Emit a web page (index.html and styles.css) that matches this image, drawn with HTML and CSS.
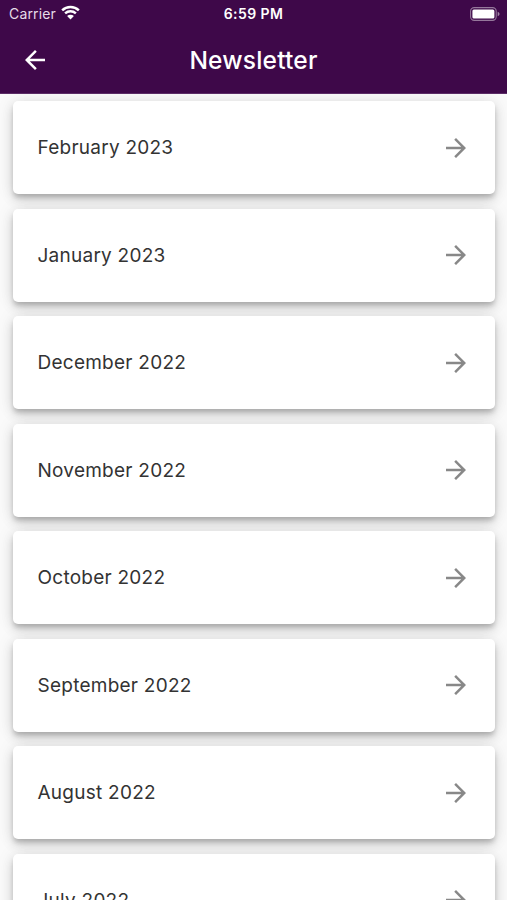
FILE: index.html
```html
<!DOCTYPE html>
<html lang="en">
<head>
<meta charset="utf-8">
<title>Newsletter</title>
<link rel="stylesheet" href="styles.css">
</head>
<body>
<svg width="0" height="0" class="defs">
  <symbol id="forward" viewBox="0 0 24 24"><path d="M12 4l-1.41 1.41L16.17 11H4v2h12.17l-5.58 5.59L12 20l8-8z"/></symbol>
</svg>
<header class="header">
  <div class="status">
    <div class="carrier"><span>Carrier</span>
      <svg class="wifi" viewBox="0 0 18 14"><path d="M1.1 4.9a11.4 11.4 0 0 1 15.8 0M3.9 7.9a7.4 7.4 0 0 1 10.2 0" fill="none" stroke="#fff" stroke-width="2.3"/><path d="M9 13.6L5.8 10.4a4.6 4.6 0 0 1 6.4 0z" fill="#fff"/></svg>
    </div>
    <div class="time">6:59 PM</div>
    <svg class="battery" viewBox="0 0 30 14"><rect x=".6" y=".6" width="25.6" height="12.8" rx="3.6" fill="none" stroke="#fff" stroke-opacity=".45" stroke-width="1.1"/><rect x="2.4" y="2.4" width="22" height="9.2" rx="1.5" fill="#fff"/><path d="M27.7 4.8c2.4 1 2.4 3.4 0 4.4z" fill="#fff" fill-opacity=".5"/></svg>
  </div>
  <div class="appbar">
    <svg class="icon back" viewBox="0 0 24 24"><path d="M20 11H7.83l5.59-5.59L12 4l-8 8 8 8 1.41-1.41L7.83 13H20v-2z"/></svg>
    <h1 class="title">Newsletter</h1>
  </div>
</header>
<main class="list">
  <div class="card"><span>February 2023</span><svg class="icon"><use href="#forward"/></svg></div>
  <div class="card"><span>January 2023</span><svg class="icon"><use href="#forward"/></svg></div>
  <div class="card"><span>December 2022</span><svg class="icon"><use href="#forward"/></svg></div>
  <div class="card"><span>November 2022</span><svg class="icon"><use href="#forward"/></svg></div>
  <div class="card"><span>October 2022</span><svg class="icon"><use href="#forward"/></svg></div>
  <div class="card"><span>September 2022</span><svg class="icon"><use href="#forward"/></svg></div>
  <div class="card"><span>August 2022</span><svg class="icon"><use href="#forward"/></svg></div>
  <div class="card"><span>July 2022</span><svg class="icon"><use href="#forward"/></svg></div>
</main>
</body>
</html>
```
FILE: styles.css
```css
* { box-sizing: border-box; }
body {
  margin: 0;
  height: 900px;
  overflow: hidden;
  display: flex;
  flex-direction: column;
  background: #fafafa;
  font-family: Inter, "Liberation Sans", sans-serif;
}
.defs { display: none; }
.header {
  flex: none;
  height: 94px;
  background: #3e0849;
  border-bottom: 1px solid #5b2c66;
  color: #fff;
}
.status {
  height: 27px;
  padding: 0 7px 0 9px;
  display: grid;
  grid-template-columns: 1fr auto 1fr;
  align-items: center;
}
.carrier {
  display: flex;
  align-items: center;
  gap: 5px;
  font-size: 14px;
  letter-spacing: 0.15px;
  color: #e6dce8;
}
.wifi { width: 19px; height: 15px; margin-top: -2px; }
.time { margin-right: 2px; font-size: 14px; font-weight: 600; letter-spacing: 0.4px; }
.battery { width: 30px; height: 14px; justify-self: end; }
.appbar {
  height: 66px;
  padding: 0 20px;
  display: grid;
  grid-template-columns: 30px 1fr 30px;
  align-items: center;
}
.title {
  margin: 0;
  font-size: 24.5px;
  line-height: 30px;
  font-weight: 500;
  letter-spacing: 0.2px;
  text-align: center;
}
.icon { width: 30px; height: 30px; fill: #888; }
.back { fill: #fff; }
.list {
  flex: 1;
  min-height: 0;
  overflow: hidden;
  padding: 7px 12.5px 0;
  display: flex;
  flex-direction: column;
  gap: 14.5px;
}
.card {
  flex: none;
  height: 93px;
  padding: 0 24px 0 25px;
  display: flex;
  align-items: center;
  justify-content: space-between;
  border-radius: 5px;
  background: #fff;
  box-shadow: 0 4px 5px -1px rgba(0, 0, 0, 0.2), 0 6px 12px rgba(0, 0, 0, 0.13), 0 1px 17px rgba(0, 0, 0, 0.1);
  font-size: 19px;
  letter-spacing: 0.25px;
  color: #333;
}
```
